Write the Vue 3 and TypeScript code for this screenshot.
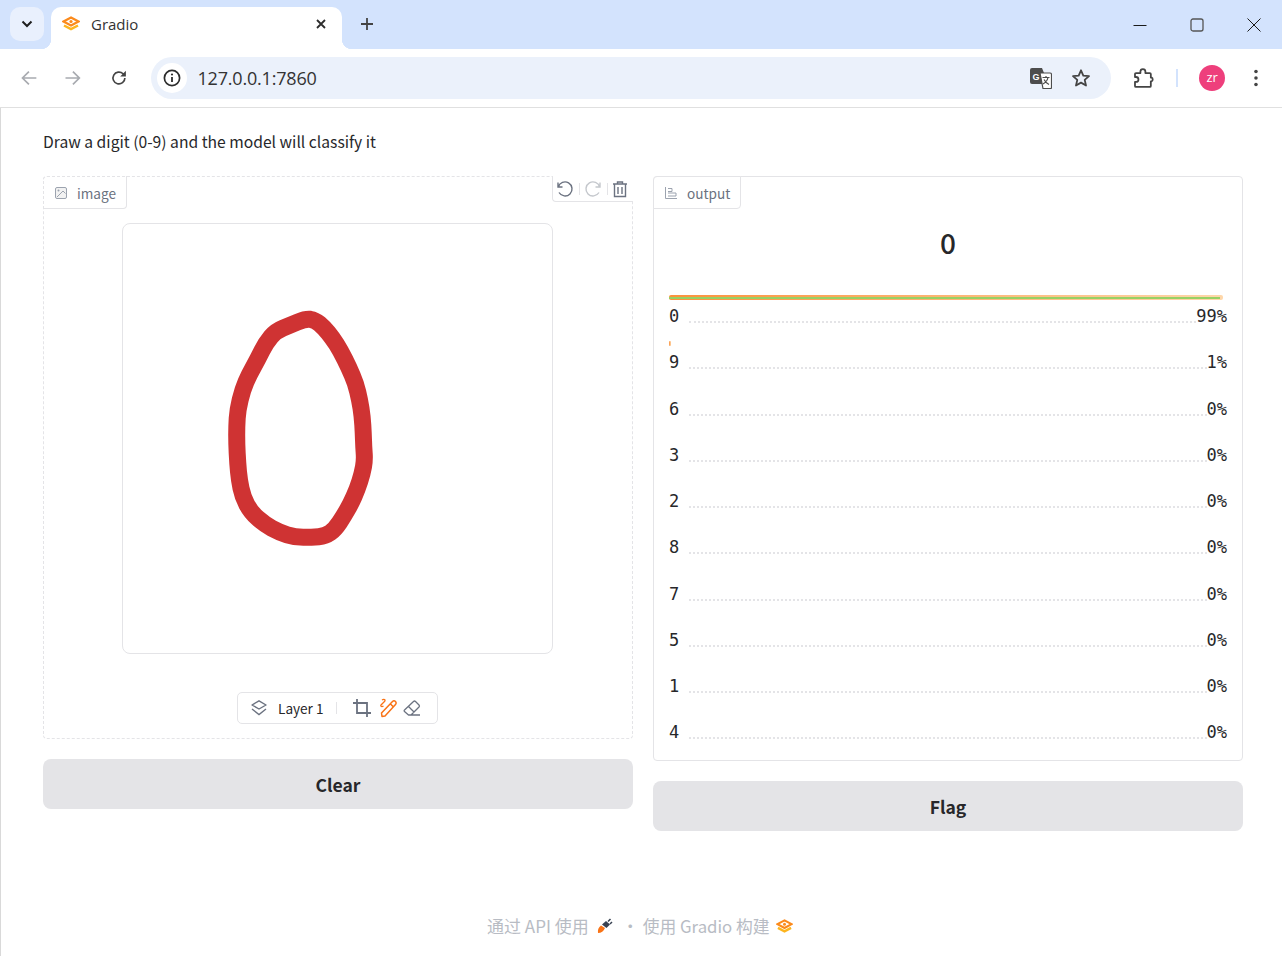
<script setup lang="ts">
const scores = [
  { label: '0', value: 99, bar: 99.3 },
  { label: '9', value: 1, bar: 0.4 },
  { label: '6', value: 0, bar: 0 },
  { label: '3', value: 0, bar: 0 },
  { label: '2', value: 0, bar: 0 },
  { label: '8', value: 0, bar: 0 },
  { label: '7', value: 0, bar: 0 },
  { label: '5', value: 0, bar: 0 },
  { label: '1', value: 0, bar: 0 },
  { label: '4', value: 0, bar: 0 },
]

// centre line of the drawn digit, in page coordinates
const trace = [
  [272, 56], [300, 60], [327, 83], [352, 113], [377, 153], [402, 203], [422, 250], [434, 300],
  [442, 350], [445, 400], [446, 440], [449, 480], [442, 520], [427, 567], [407, 612], [387, 647],
  [360, 688], [332, 708], [290, 712], [240, 712], [193, 697], [148, 672], [108, 637], [83, 590],
  [73, 540], [68, 490], [65, 430], [65, 380], [68, 330], [83, 268], [103, 223], [128, 178],
  [153, 128], [183, 93], [225, 76],
].map(([x, y]) => [x / 3 + 215, y / 3 + 300])

const mid = (a: number[], b: number[]) => `${((a[0] + b[0]) / 2).toFixed(1)} ${((a[1] + b[1]) / 2).toFixed(1)}`
const stroke =
  `M${mid(trace[0], trace[1])} ` +
  trace
    .map((_, i) => {
      const p = trace[(i + 1) % trace.length]
      const q = trace[(i + 2) % trace.length]
      return `Q${p[0].toFixed(1)} ${p[1].toFixed(1)} ${mid(p, q)}`
    })
    .join(' ') +
  ' Z'
</script>

<template>
  <div class="window">
    <header class="tabstrip">
      <button class="tab-search">
        <svg width="12" height="8" viewBox="0 0 12 8"><path d="M1.500 1.500 6 6l4.500-4.500" fill="none" stroke="#1f1f1f" stroke-width="2" /></svg>
      </button>
      <div class="tab">
        <svg class="logo" width="18" height="16" viewBox="0 0 18 16">
          <path d="M9 1.500 16.500 5.500 9 9.500 1.500 5.500Z" fill="none" stroke="#fb8a1c" stroke-width="2.300" />
          <circle cx="9" cy="5.500" r="1.600" fill="#fb8a1c" />
          <path d="M2 9.500 9 13.200 16 9.500" fill="none" stroke="#fdb51f" stroke-width="2.500" />
        </svg>
        <span class="tab-title">Gradio</span>
        <svg class="tab-close" width="10" height="10" viewBox="0 0 10 10"><path d="M1 1l8 8M9 1 1 9" stroke="#2c2c2c" stroke-width="1.800" /></svg>
      </div>
      <svg class="new-tab" width="14" height="14" viewBox="0 0 14 14"><path d="M7 1v12M1 7h12" stroke="#444" stroke-width="1.800" /></svg>
      <div class="win-buttons">
        <svg width="14" height="14" viewBox="0 0 14 14"><path d="M0.500 7.500h13" stroke="#1a1a1a" stroke-width="1" /></svg>
        <svg width="14" height="14" viewBox="0 0 14 14"><rect x="1" y="1" width="12" height="12" rx="2" fill="none" stroke="#555" stroke-width="1.300" /></svg>
        <svg width="14" height="14" viewBox="0 0 14 14"><path d="M.5.500l13 13M13.500.500l-13 13" stroke="#1a1a1a" stroke-width="1" /></svg>
      </div>
    </header>

    <nav class="toolbar">
      <svg class="nav-icon" width="16" height="16" viewBox="0 0 16 16"><path d="M15.500 8H1.500M8 1.500 1.500 8 8 14.500" fill="none" stroke="#a8abb0" stroke-width="1.700" /></svg>
      <svg class="nav-icon" width="16" height="16" viewBox="0 0 16 16"><path d="M.5 8h14M8 1.500 14.500 8 8 14.500" fill="none" stroke="#a8abb0" stroke-width="1.700" /></svg>
      <svg class="nav-icon" width="16" height="16" viewBox="0 0 16 16"><path d="M14 8a6 6 0 1 1-1.800-4.300L14 5.500" fill="none" stroke="#444" stroke-width="1.700" /><path d="M15 .8V6.500H9.300Z" fill="#444" /></svg>
      <div class="omnibox">
        <span class="info">
          <svg width="18" height="18" viewBox="0 0 18 18"><circle cx="9" cy="9" r="7.600" fill="none" stroke="#2c2c2c" stroke-width="1.700" /><path d="M9 8v5" stroke="#2c2c2c" stroke-width="1.800" /><circle cx="9" cy="5.500" r="1.100" fill="#2c2c2c" /></svg>
        </span>
        <span class="url">127.0.0.1:7860</span>
        <svg class="translate" width="22" height="22" viewBox="0 0 22 22">
          <path d="M2 1h10l6 15a2 2 0 0 1-2 1H2a2 2 0 0 1-2-2V3a2 2 0 0 1 2-2Z" fill="#4d4d4d" />
          <path d="M10 6h10a1.500 1.500 0 0 1 1.500 1.500v13a1 1 0 0 1-1 1H13Z" fill="#fff" stroke="#4d4d4d" stroke-width="1.200" />
          <text x="2.500" y="13" class="g-glyph">G</text>
          <path d="M12.500 10.500h7M16 9v1.500M18 10.500c-.6 3-2.500 5-5 6.500M14 12.500c1 2 2.500 3.500 5 5" fill="none" stroke="#4d4d4d" stroke-width="1.200" />
        </svg>
        <svg class="star" width="20" height="20" viewBox="0 0 20 20"><path d="M10 2.300l2.300 5.300 5.700.5-4.300 3.800 1.300 5.600L10 14.600l-5 2.900 1.300-5.600L2 8.100l5.700-.5Z" fill="none" stroke="#444" stroke-width="1.800" stroke-linejoin="round" /></svg>
      </div>
      <svg class="ext" width="22" height="22" viewBox="0 0 22 22"><path d="M3 6h4.500V4.500a2.500 2.500 0 0 1 5 0V6H17a1 1 0 0 1 1 1v3.500h.8a2.200 2.200 0 0 1 0 3.800H18V19a1 1 0 0 1-1 1H3a1 1 0 0 1-1-1v-4h1a2.500 2.500 0 0 0 0-5H2V7a1 1 0 0 1 1-1Z" fill="none" stroke="#444" stroke-width="1.800" stroke-linejoin="round" /></svg>
      <span class="sep"></span>
      <span class="avatar">zr</span>
      <svg class="dots" width="4" height="18" viewBox="0 0 4 18"><circle cx="2" cy="2.500" r="1.800" fill="#444" /><circle cx="2" cy="9" r="1.800" fill="#444" /><circle cx="2" cy="15.500" r="1.800" fill="#444" /></svg>
    </nav>

    <main class="page">
      <p class="desc">Draw a digit (0-9) and the model will classify it</p>

      <div class="columns">
        <section class="col">
          <div class="block editor">
            <div class="block-label">
              <svg width="12" height="12" viewBox="0 0 12 12"><rect x=".5" y=".5" width="11" height="11" rx="1.500" fill="#f2f2f2" stroke="#9ca3af" /><circle cx="3.500" cy="3.500" r="1" fill="#9ca3af" /><path d="M2 10 8 4l2.500 2.500" fill="none" stroke="#9ca3af" /></svg>
              <span>image</span>
            </div>
            <div class="history">
              <svg width="18" height="18" viewBox="0 0 18 18"><path d="M2 2.500V7h4.500M2.300 7A7 7 0 1 1 3 12.500" fill="none" stroke="#6b7280" stroke-width="1.400" /></svg>
              <i></i>
              <svg width="18" height="18" viewBox="0 0 18 18"><path d="M16 2.500V7h-4.500M15.700 7A7 7 0 1 0 15 12.500" fill="none" stroke="#c4c7cc" stroke-width="1.400" /></svg>
              <i></i>
              <svg width="16" height="18" viewBox="0 0 16 18"><path d="M1 4h14M5.500 4V2h5v2M2.500 4v12.500h11V4M6 7v7M10 7v7" fill="none" stroke="#6b7280" stroke-width="1.400" /></svg>
            </div>
            <div class="canvas">
              <svg width="431" height="431" viewBox="122 223 431 431">
                <path :d="stroke" fill="none" stroke="#cf3333" stroke-width="17" stroke-linejoin="round" />
              </svg>
            </div>
            <div class="layer-bar">
              <svg width="18" height="18" viewBox="0 0 18 18"><path d="M9 1.800 16 6 9 10 2 6Z" fill="none" stroke="#6b7280" stroke-width="1.400" stroke-linejoin="round" /><path d="M2 10l7 5.500 7-5.500" fill="none" stroke="#6b7280" stroke-width="1.400" /></svg>
              <span class="layer-name">Layer 1</span>
              <i></i>
              <svg class="crop" width="20" height="20" viewBox="0 0 20 20"><path d="M5 1v14h14M1 5h14v14" fill="none" stroke="#6b7280" stroke-width="1.800" /></svg>
              <svg class="pen" width="20" height="20" viewBox="0 0 20 20"><path d="M3 18.500 2.500 15 13.500 3.500a2 2 0 0 1 3 3L6 18Z M11.500 6l3 3" fill="none" stroke="#f97316" stroke-width="1.500" stroke-linejoin="round" /><path d="M3 2c2-1.500 4 0 2.500 1.500L2 7c-1 1.500 1 2 2.500 1" fill="none" stroke="#f97316" stroke-width="1.300" /></svg>
              <svg class="eraser" width="18" height="18" viewBox="0 0 18 18"><path d="M1.500 11 10.500 2.500a1.500 1.500 0 0 1 2 0l3.500 3.500a1.500 1.500 0 0 1 0 2L8 16H5.500L1.500 12.500a1 1 0 0 1 0-1.500ZM5.500 7.500l5.500 5.500M8 16h9" fill="none" stroke="#6b7280" stroke-width="1.300" stroke-linejoin="round" /></svg>
            </div>
          </div>
          <button class="action">Clear</button>
        </section>

        <section class="col">
          <div class="block output">
            <div class="block-label">
              <svg width="12" height="12" viewBox="0 0 12 12"><path d="M.5 0v11.500H12M3 1.500h4v3H3M3 6h8v3H3" fill="none" stroke="#9ca3af" /></svg>
              <span>output</span>
            </div>
            <h2 class="top-label">0</h2>
            <div class="scores">
              <div v-for="s in scores" :key="s.label" class="score">
                <div class="bar" :style="{ width: s.bar + '%' }"><b v-if="s.value > 50"></b></div>
                <div class="score-row">
                  <span>{{ s.label }}</span>
                  <em></em>
                  <span>{{ s.value }}%</span>
                </div>
              </div>
            </div>
          </div>
          <button class="action">Flag</button>
        </section>
      </div>

      <footer class="foot">
        <span>通过 API 使用</span>
        <svg width="16" height="16" viewBox="0 0 16 16"><path d="M1 15c-.5-3 .5-6 3-7.500L8 10c-1 3-4 5-7 5Z" fill="#f97316" /><path d="M5 6.500 9 3l4 3.500L9.500 10Z" fill="#374151" /><path d="M11 3.500 13.500 1M13 6l2-2" stroke="#374151" stroke-width="1.500" /></svg>
        <span class="dot">·</span>
        <span class="built">使用 Gradio 构建</span>
        <svg width="17" height="15" viewBox="0 0 18 16">
          <path d="M9 1.500 16.500 5.500 9 9.500 1.500 5.500Z" fill="none" stroke="#fb8a1c" stroke-width="2.300" />
          <circle cx="9" cy="5.500" r="1.600" fill="#fb8a1c" />
          <path d="M2 9.500 9 13.200 16 9.500" fill="none" stroke="#fdb51f" stroke-width="2.500" />
        </svg>
      </footer>
    </main>
  </div>
</template>

<style scoped>
.window {
  width: 1282px;
  height: 956px;
  overflow: hidden;
  display: flex;
  flex-direction: column;
  background: #fff;
  font-family: "Noto Sans CJK SC", "Noto Sans", sans-serif;
  color: #27272a;
}

.tabstrip {
  height: 49px;
  flex: none;
  display: flex;
  align-items: flex-end;
  background: #d3e3fd;
  padding-left: 10px;
}
.tab-search {
  width: 34px;
  height: 34px;
  margin-bottom: 8px;
  border: none;
  border-radius: 10px;
  background: #e9f0fd;
  display: flex;
  align-items: center;
  justify-content: center;
  padding: 0;
}
.tab {
  position: relative;
  width: 291px;
  height: 42px;
  margin-left: 7px;
  background: #fff;
  border-radius: 10px 10px 0 0;
  display: flex;
  align-items: center;
  padding: 0 16px 8px 11px;
  box-sizing: border-box;
}
.tab::before,
.tab::after {
  content: "";
  position: absolute;
  bottom: 0;
  width: 10px;
  height: 10px;
}
.tab::before {
  left: -10px;
  background: radial-gradient(circle at 0 0, #d3e3fd 10px, #fff 10.500px);
}
.tab::after {
  right: -10px;
  background: radial-gradient(circle at 100% 0, #d3e3fd 10px, #fff 10.500px);
}
.tab-title {
  margin-left: 11px;
  font: 15px "Open Sans", sans-serif;
  color: #333;
  flex: 1;
}
.new-tab {
  margin: 0 0 18px 18px;
}
.win-buttons {
  margin-left: auto;
  display: flex;
  gap: 43px;
  padding-right: 21px;
  margin-bottom: 17px;
}

.toolbar {
  height: 59px;
  flex: none;
  box-sizing: border-box;
  border-bottom: 1px solid #e0e0e0;
  display: flex;
  align-items: center;
  padding: 0 24px 0 21px;
}
.nav-icon {
  margin-right: 28px;
}
.nav-icon:nth-child(2) {
  margin-right: 30px;
}
.nav-icon:nth-child(3) {
  margin-right: 24px;
}
.omnibox {
  width: 960px;
  height: 42px;
  flex: none;
  border-radius: 21px;
  background: #ebf1fb;
  display: flex;
  align-items: center;
  padding-right: 20px;
  box-sizing: border-box;
}
.info {
  width: 30px;
  height: 30px;
  margin-left: 6px;
  border-radius: 50%;
  background: #fff;
  display: flex;
  align-items: center;
  justify-content: center;
}
.url {
  margin-left: 11px;
  font: 18px "Open Sans", sans-serif;
  letter-spacing: -0.2px;
  color: #333;
  flex: 1;
}
.g-glyph {
  font: bold 9px "Liberation Sans", sans-serif;
  fill: #fff;
}
.star {
  margin-left: 19px;
}
.ext {
  margin-left: 22px;
}
.sep {
  width: 2px;
  height: 18px;
  margin-left: 22px;
  background: #d3e3fd;
}
.avatar {
  width: 26px;
  height: 26px;
  margin-left: 21px;
  border-radius: 50%;
  background: #ee3f7c;
  color: #fff;
  font: 13px/25px "Open Sans", sans-serif;
  text-align: center;
}
.dots {
  margin-left: 29px;
}

.page {
  flex: 1;
  display: flex;
  flex-direction: column;
  padding: 0 39px 0 43px;
  border-left: 1px solid #d9d9d9;
  position: relative;
}
.desc {
  margin: 22px 0 0 -1px;
  font-size: 15.670px;
  line-height: 24px;
  height: 46px;
}
.columns {
  display: flex;
  align-items: flex-start;
  gap: 20px;
  margin-left: -1px;
}
.col {
  width: 590px;
  display: flex;
  flex-direction: column;
  gap: 20px;
}
.block {
  position: relative;
  box-sizing: border-box;
  border: 1px solid #e4e4e7;
  border-radius: 4px;
}
.block-label {
  position: absolute;
  top: -1px;
  left: -1px;
  height: 33px;
  box-sizing: border-box;
  padding: 0 10px 0 11px;
  display: flex;
  align-items: center;
  gap: 10px;
  border: 1px solid #e4e4e7;
  border-radius: 4px 0 4px 0;
  font-size: 13.600px;
  color: #6b7280;
  background: #fff;
}
.editor {
  height: 563px;
  border-style: dashed;
  display: flex;
  flex-direction: column;
  align-items: center;
  padding: 46px 1px 0 0;
}
.editor .block-label {
  border-top-style: dashed;
  border-left-style: dashed;
}
.history {
  position: absolute;
  top: -1px;
  right: -1px;
  height: 26px;
  width: 81px;
  box-sizing: border-box;
  border: 1px solid #e4e4e7;
  border-top: none;
  border-right: none;
  border-radius: 0 0 0 4px;
  background: #fff;
  display: flex;
  align-items: center;
  justify-content: flex-start;
  gap: 4.500px;
  padding-left: 3px;
}
.history i,
.layer-bar i {
  width: 1px;
  height: 12px;
  background: #e4e4e7;
}
.canvas {
  width: 431px;
  height: 431px;
  box-sizing: border-box;
  border: 1px solid #e4e4e7;
  border-radius: 8px;
  overflow: hidden;
}
.canvas svg {
  display: block;
  margin: -1px;
}
.layer-bar {
  width: 201px;
  height: 32px;
  box-sizing: border-box;
  margin-top: 38px;
  border: 1px solid #e4e4e7;
  border-radius: 5px;
  display: flex;
  align-items: center;
  padding-left: 12px;
}
.layer-name {
  margin: 0 13px 0 10px;
  font-size: 13.600px;
  color: #27272a;
}
.crop {
  margin-left: 15px;
}
.pen {
  margin-left: 7px;
}
.eraser {
  margin-left: 4px;
}
.action {
  height: 50px;
  border: none;
  border-radius: 8px;
  background: #e4e4e7;
  font: 600 17.500px "Noto Sans CJK SC", sans-serif;
  color: #27272a;
}
.output {
  height: 585px;
  padding: 0 15px;
  border-radius: 4px;
}
.top-label {
  margin: 0;
  height: 118px;
  padding-top: 45px;
  box-sizing: border-box;
  text-align: center;
  font-size: 28px;
  line-height: 40px;
  font-weight: 500;
}
.scores {
  display: grid;
  grid-auto-rows: 46.250px;
}
.bar {
  position: relative;
  height: 5px;
  background: linear-gradient(to right, #fb923c, #fed7aa);
  border-radius: 2px;
}
.bar b {
  position: absolute;
  left: 0;
  right: 3px;
  top: 2px;
  height: 1.500px;
  background: #97d164;
}
.score-row {
  margin-top: 4px;
  height: 20px;
  display: flex;
  align-items: flex-end;
  font: 17px/20px "DejaVu Sans Mono", monospace;
  color: #27272a;
}
.score-row span {
  transform: translateY(2px);
}
.score-row em {
  flex: 1;
  margin: 0 0 0 10px;
  border-bottom: 2px dotted #e4e4e7;
  transform: translateY(-1px);
}
.foot {
  position: absolute;
  left: 486px;
  top: 805px;
  display: flex;
  align-items: center;
  gap: 8px;
  font-size: 17px;
  line-height: 26px;
  color: #b8bcc4;
}
.foot .dot {
  margin: 0 -4px 0 1px;
}
.foot .built {
  font-size: 16.800px;
  margin-right: -2px;
}
</style>

<style>
html,
body {
  margin: 0;
  overflow: hidden;
}
</style>
